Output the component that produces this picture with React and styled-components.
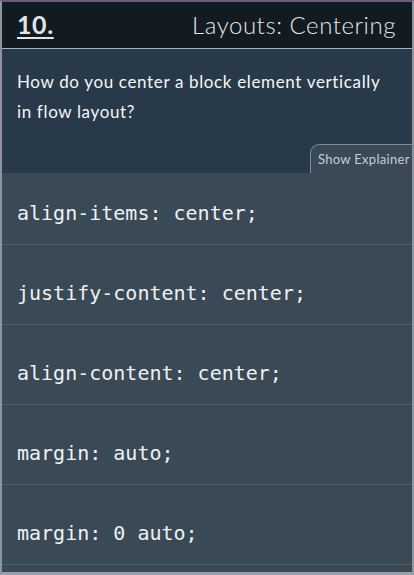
import React from "react";
import styled, { createGlobalStyle } from "styled-components";

const GlobalStyle = createGlobalStyle`
  html, body {
    margin: 0;
    padding: 0;
    background: #3a4956;
  }
  * {
    box-sizing: border-box;
  }
`;

const options = [
  "align-items: center;",
  "justify-content: center;",
  "align-content: center;",
  "margin: auto;",
  "margin: 0 auto;",
];

function App() {
  return (
    <>
      <GlobalStyle />
      <Frame>
        <Header>
          <Number>10.</Number>
          <Topic>Layouts: Centering</Topic>
        </Header>
        <Question>
          <QuestionText>
            How do you center a block element vertically in flow layout?
          </QuestionText>
          <ExplainerTab>Show Explainer</ExplainerTab>
        </Question>
        <OptionList>
          {options.map((opt, i) => (
            <Option key={opt} first={i === 0}>
              {opt}
            </Option>
          ))}
        </OptionList>
      </Frame>
    </>
  );
}

export default App;

const Frame = styled.div`
  width: 414px;
  height: 575px;
  overflow: hidden;
  display: flex;
  flex-direction: column;
  border-top: 2px solid #6b5a78;
  border-left: 2px solid #8d959c;
  border-right: 2px solid #8d959c;
  border-bottom: 3px solid #9aa1a8;
  background: #3a4956;
  font-family: "Lato", "Open Sans", sans-serif;
`;

const Header = styled.header`
  height: 47px;
  flex-shrink: 0;
  display: flex;
  align-items: center;
  justify-content: space-between;
  padding: 0 16px 2px 15px;
  background: #131b22;
  border-bottom: 1px solid #a9b1b8;
`;

const Number = styled.span`
  font-size: 25px;
  font-weight: 700;
  color: #e2e4e6;
  letter-spacing: 0.6px;
  text-decoration: underline;
  text-decoration-thickness: 2px;
  text-underline-offset: 3px;
`;

const Topic = styled.span`
  font-size: 24px;
  font-weight: 300;
  color: #e4e6e8;
  letter-spacing: 0.55px;
`;

const Question = styled.section`
  position: relative;
  flex-shrink: 0;
  height: 124px;
  padding: 18px 15px 0 15px;
  background: #283a4a;
`;

const QuestionText = styled.p`
  margin: 0;
  font-size: 17px;
  line-height: 30px;
  letter-spacing: 0.65px;
  color: #f4f6f8;
`;

const ExplainerTab = styled.button`
  position: absolute;
  right: 0;
  bottom: 0;
  width: 102px;
  height: 29px;
  padding: 0 0 0 7px;
  text-align: left;
  font-family: "Lato", "Open Sans", sans-serif;
  font-size: 13px;
  letter-spacing: 0.3px;
  color: #c6ccd2;
  background: #3a4956;
  border: 1px solid #7f8b96;
  border-right: none;
  border-bottom: none;
  border-top-left-radius: 9px;
  cursor: pointer;
`;

const OptionList = styled.ul`
  list-style: none;
  margin: 0;
  padding: 0;
  flex: 1;
  background: #3a4956;
`;

const Option = styled.li`
  height: ${(p) => (p.first ? "72px" : "80px")};
  display: flex;
  align-items: flex-end;
  padding: 0 15px 19px 15px;
  border-bottom: 1px solid #4c5c69;
  font-family: "DejaVu Sans Mono", "Liberation Mono", monospace;
  font-size: 20px;
  line-height: 24px;
  color: #eef1f4;
`;
